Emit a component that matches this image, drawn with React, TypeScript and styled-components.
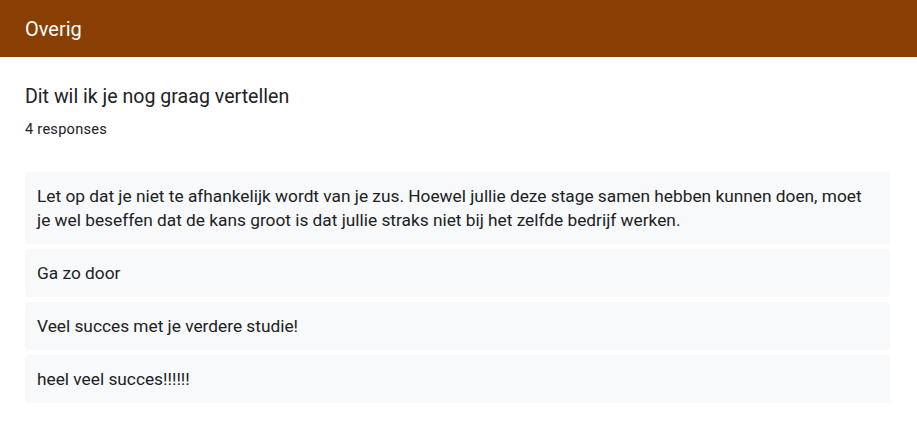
import styled, { createGlobalStyle } from "styled-components"

const GlobalStyle = createGlobalStyle`
  body {
    margin: 0;
    background: #ffffff;
    font-family: Roboto, "Noto Sans", Arial, sans-serif;
    color: #202124;
  }
`

const answers = [
    "Let op dat je niet te afhankelijk wordt van je zus. Hoewel jullie deze stage samen hebben kunnen doen, moet je wel beseffen dat de kans groot is dat jullie straks niet bij het zelfde bedrijf werken.",
    "Ga zo door",
    "Veel succes met je verdere studie!",
    "heel veel succes!!!!!!",
]

export default function App() {
    return (
        <>
            <GlobalStyle />
            <Page>
                <Header>Overig</Header>
                <Section>
                    <Title>Dit wil ik je nog graag vertellen</Title>
                    <Count>{answers.length} responses</Count>
                    <AnswerList>
                        {answers.map((a, i) => (
                            <Answer key={i}>{a}</Answer>
                        ))}
                    </AnswerList>
                </Section>
            </Page>
        </>
    )
}

const Page = styled.div`
  width: 917px;
  display: flex;
  flex-direction: column;
`

const Header = styled.div`
  height: 57px;
  background: #893e03;
  color: #ffffff;
  font-size: 20px;
  display: flex;
  align-items: center;
  padding-left: 25px;
`

const Section = styled.div`
  display: flex;
  flex-direction: column;
  padding: 26px 27px 0 25px;
`

const Title = styled.div`
  font-size: 19.6px;
  line-height: 28px;
`

const Count = styled.div`
  font-size: 14.6px;
  letter-spacing: 0.25px;
  line-height: 20px;
  margin-top: 8px;
`

const AnswerList = styled.div`
  display: flex;
  flex-direction: column;
  gap: 5px;
  margin-top: 33px;
`

const Answer = styled.div`
  background: #f8f9fa;
  border-radius: 4px;
  padding: 12px 16px 12px 12px;
  font-size: 17.3px;
  line-height: 24px;
`
